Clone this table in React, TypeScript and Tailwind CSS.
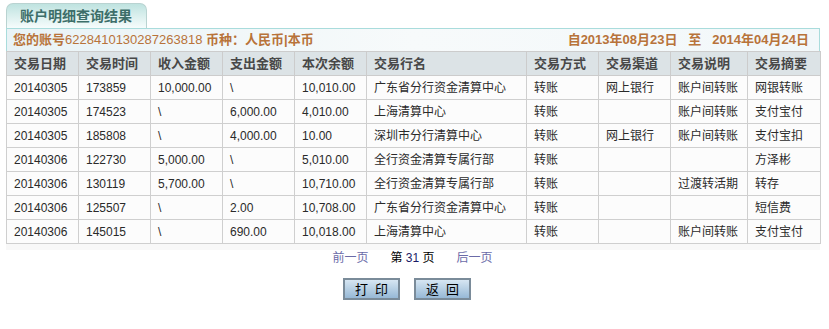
import React from "react";

const cols = [72, 72, 72, 72, 72, 160, 72, 72, 77, 73];
const heads = ["交易日期", "交易时间", "收入金额", "支出金额", "本次余额", "交易行名", "交易方式", "交易渠道", "交易说明", "交易摘要"];

const rows = [
  ["20140305", "173859", "10,000.00", "\\", "10,010.00", "广东省分行资金清算中心", "转账", "网上银行", "账户间转账", "网银转账"],
  ["20140305", "174523", "\\", "6,000.00", "4,010.00", "上海清算中心", "转账", "", "账户间转账", "支付宝付"],
  ["20140305", "185808", "\\", "4,000.00", "10.00", "深圳市分行清算中心", "转账", "网上银行", "账户间转账", "支付宝扣"],
  ["20140306", "122730", "5,000.00", "\\", "5,010.00", "全行资金清算专属行部", "转账", "", "", "方泽彬"],
  ["20140306", "130119", "5,700.00", "\\", "10,710.00", "全行资金清算专属行部", "转账", "", "过渡转活期", "转存"],
  ["20140306", "125507", "\\", "2.00", "10,708.00", "广东省分行资金清算中心", "转账", "", "", "短信费"],
  ["20140306", "145015", "\\", "690.00", "10,018.00", "上海清算中心", "转账", "", "账户间转账", "支付宝付"],
];

const font = { fontFamily: '"Liberation Sans", "Noto Sans CJK SC", sans-serif' };

export default function App() {
  return (
    <div className="w-[829px] h-[329px] bg-white text-[12px]" style={font}>
      <div className="pt-[3px] pl-[6px]">
        <div className="w-[141px] h-[25px] rounded-t-[7px] border border-b-0 border-[#b9d3d1] bg-gradient-to-b from-[#bfe3e0] to-[#f6fcfc] flex items-center pl-[13px] text-[14px] font-bold text-[#3d6e69]">
          账户明细查询结果
        </div>
      </div>
      <div className="ml-[6px] w-[814px]">
        <div className="h-[23px] border-t border-x border-[#a9dcdc] bg-gradient-to-r from-[#e9f3f6] via-[#f7fafb] to-[#f2f8fa] flex items-center justify-between px-[6px] text-[13px] text-[#b8733a]">
          <div>
            <span className="font-bold">您的账号</span>
            <span>6228410130287263818</span>
            <span className="font-bold"> 币种：人民币|本币</span>
          </div>
          <div className="font-bold pr-[4px]">
            自2013年08月23日&nbsp;&nbsp;&nbsp;至&nbsp;&nbsp;&nbsp;2014年04月24日
          </div>
        </div>
        <table className="border-collapse table-fixed w-[814px]">
          <colgroup>
            {cols.map((w, i) => (
              <col key={i} style={{ width: w }} />
            ))}
          </colgroup>
          <thead>
            <tr className="h-[24px] bg-[#dce3e6]">
              {heads.map((h) => (
                <th key={h} className="border border-[#cccccc] text-left pl-[7px] font-bold text-[13px] text-[#484848]">
                  {h}
                </th>
              ))}
            </tr>
          </thead>
          <tbody>
            {rows.map((r, i) => (
              <tr key={i} className="h-[24px] bg-[#fcfcfc]">
                {r.map((c, j) => (
                  <td key={j} className="border border-[#cfcfcf] pl-[7px] text-[#2a2a2a] whitespace-nowrap">
                    {c}
                  </td>
                ))}
              </tr>
            ))}
          </tbody>
        </table>
        <div className="h-[6px] bg-[#f8f8f8]" />
      </div>
      <div className="flex justify-center pr-[4px] gap-[22px] h-[16px] items-center">
        <span className="text-[#6b6ba8]">前一页</span>
        <span className="text-black">第 <span className="text-[#1a1a66]">31</span> 页</span>
        <span className="text-[#6b6ba8]">后一页</span>
      </div>
      <div className="flex justify-center gap-[14px] mt-[12px] pr-[15px]">
        <button className="w-[57px] h-[22px] border-2 border-[#7a8b99] bg-gradient-to-b from-[#d6e6f2] to-[#97b9d6] text-[13px] text-black tracking-[7px] pl-[7px]">
          打印
        </button>
        <button className="w-[57px] h-[22px] border-2 border-[#7a8b99] bg-gradient-to-b from-[#d6e6f2] to-[#97b9d6] text-[13px] text-black tracking-[7px] pl-[7px]">
          返回
        </button>
      </div>
    </div>
  );
}
